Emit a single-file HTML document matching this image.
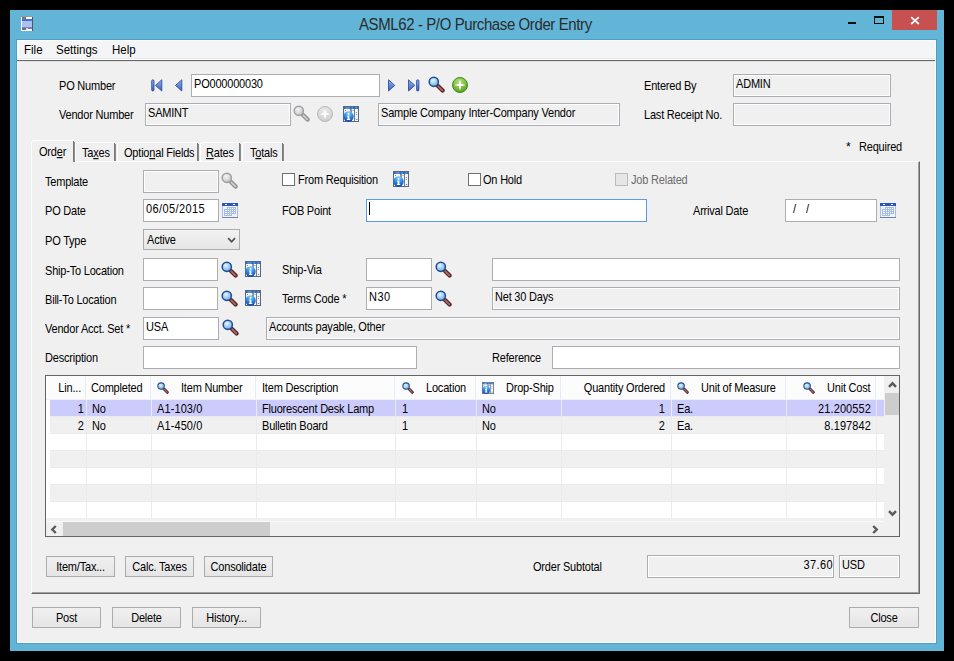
<!DOCTYPE html>
<html><head><meta charset="utf-8">
<style>
*{box-sizing:border-box;margin:0;padding:0}
html,body{width:954px;height:661px;overflow:hidden;background:#000}
body{position:relative;font-family:"Liberation Sans",sans-serif;font-size:11px;color:#000;letter-spacing:-0.2px}
.a{position:absolute}
.t{position:absolute;white-space:nowrap;line-height:13px;transform:scaleY(1.12);transform-origin:0 10.3px}
.in{position:absolute;background:#fff;border:1px solid #abadb3}
.ro{position:absolute;background:#f0f0f0;border:1px solid #abadb3;box-shadow:inset 1px 1px 0 #fff,inset -1px -1px 0 #fff}
.it{position:absolute;left:2px;top:3px;white-space:nowrap;line-height:13px;transform:scaleY(1.12);transform-origin:0 10.3px}
.btn{position:absolute;border:1px solid #acacac;background:linear-gradient(#f0f0f0,#e5e5e5);text-align:center;line-height:19px}
.btn span{display:inline-block;position:relative;top:1px;transform:scaleY(1.12);transform-origin:0 13.3px}
svg.i{position:absolute;overflow:visible}
</style></head><body>
<svg width="0" height="0" style="position:absolute">
<defs>
<linearGradient id="gb" x1="0" y1="0" x2="0" y2="1"><stop offset="0" stop-color="#8fb0ea"/><stop offset="1" stop-color="#3a64c0"/></linearGradient>
<radialGradient id="lens" cx="0.4" cy="0.35" r="0.7"><stop offset="0" stop-color="#e8f4ff"/><stop offset="1" stop-color="#6aa8e8"/></radialGradient>
<radialGradient id="lensg" cx="0.4" cy="0.35" r="0.7"><stop offset="0" stop-color="#f4f4f4"/><stop offset="1" stop-color="#c4c4c4"/></radialGradient>
<radialGradient id="grn" cx="0.45" cy="0.3" r="0.75"><stop offset="0" stop-color="#b4e482"/><stop offset="0.6" stop-color="#78bc3c"/><stop offset="1" stop-color="#4e9a22"/></radialGradient>
<radialGradient id="gry" cx="0.45" cy="0.3" r="0.75"><stop offset="0" stop-color="#ececec"/><stop offset="1" stop-color="#cacaca"/></radialGradient>
<radialGradient id="blu" cx="0.5" cy="0.1" r="0.9"><stop offset="0" stop-color="#86d0ff"/><stop offset="0.5" stop-color="#3690e2"/><stop offset="1" stop-color="#1446b4"/></radialGradient>
<symbol id="mag" viewBox="0 0 17 17"><line x1="10" y1="10" x2="14.6" y2="14.6" stroke="#5a2626" stroke-width="4.2" stroke-linecap="round"/><line x1="10.3" y1="10.3" x2="14.3" y2="14.3" stroke="#a86a6a" stroke-width="1.8" stroke-linecap="round"/><circle cx="5.8" cy="5.8" r="4.6" fill="url(#lens)" stroke="#1d5090" stroke-width="1.5"/></symbol>
<symbol id="magg" viewBox="0 0 17 17"><line x1="10" y1="10" x2="14.6" y2="14.6" stroke="#8c8c8c" stroke-width="4.2" stroke-linecap="round"/><line x1="10.3" y1="10.3" x2="14.3" y2="14.3" stroke="#cfcfcf" stroke-width="1.8" stroke-linecap="round"/><circle cx="5.8" cy="5.8" r="4.6" fill="url(#lensg)" stroke="#a0a0a0" stroke-width="1.5"/></symbol>
<symbol id="plus" viewBox="0 0 16 16"><circle cx="8" cy="8" r="7.5" fill="url(#grn)" stroke="#3f8a1a" stroke-width="1"/><path d="M7 3.2h2v9.6h-2zM3.2 7h9.6v2h-9.6z" fill="#d4ecc0" opacity="0.6"/><path d="M7 4.8h2v2.2h2.2v2h-2.2v2.2h-2v-2.2h-2.2v-2h2.2z" fill="#fff"/></symbol>
<symbol id="plusg" viewBox="0 0 16 16"><circle cx="8" cy="8" r="7.5" fill="url(#gry)" stroke="#bababa" stroke-width="1"/><path d="M7 3.2h2v9.6h-2zM3.2 7h9.6v2h-9.6z" fill="#eee" opacity="0.6"/><path d="M7 4.8h2v2.2h2.2v2h-2.2v2.2h-2v-2.2h-2.2v-2h2.2z" fill="#fff"/></symbol>
<symbol id="info" viewBox="0 0 16 16"><rect x="0" y="0" width="16" height="16" fill="#55697a"/><rect x="1" y="1" width="14" height="14" fill="#f4f6f8"/><rect x="1" y="1" width="14" height="2" fill="#2f6cc0"/><rect x="2.5" y="1.6" width="4" height="0.8" fill="#9cc0ee"/><rect x="8.5" y="1.6" width="1.5" height="0.8" fill="#9cc0ee"/><rect x="12.5" y="1.6" width="1.5" height="0.8" fill="#9cc0ee"/><rect x="7.3" y="3" width="1.4" height="12" fill="#5a6e80"/><rect x="11" y="3" width="1" height="12" fill="#6a7e90"/><rect x="2" y="4" width="1" height="1" fill="#8494a4"/><rect x="9.5" y="4" width="1" height="1" fill="#8494a4"/><rect x="12.8" y="6" width="1" height="1" fill="#6a88b0"/><rect x="12.8" y="8" width="1" height="1" fill="#6a88b0"/><rect x="12.8" y="13" width="1.5" height="1" fill="#6a88b0"/><circle cx="5.5" cy="10.5" r="5.2" fill="url(#blu)"/><circle cx="5.6" cy="7.9" r="0.95" fill="#fff"/><path d="M4.5 9.4h1.9v3.5h0.8v1h-3.3v-1h0.7v-2.5h-0.7z" fill="#fff"/></symbol>
<symbol id="cal" viewBox="0 0 16 15"><rect x="0" y="0" width="16" height="15" fill="#a9bde6"/><rect x="1" y="3" width="14" height="11" fill="#eef3fc"/><rect x="0" y="0" width="16" height="3" fill="#2d55b5"/><rect x="3" y="1" width="2" height="1" fill="#fff"/><rect x="11" y="1" width="2" height="1" fill="#fff"/><rect x="0" y="14" width="16" height="1" fill="#6c84b4"/><path d="M5 4h9v7h-4v2h-8v-7h3z" fill="#a4bce8"/><rect x="6" y="5" width="1" height="1" fill="#fff"/><rect x="8" y="5" width="1" height="1" fill="#fff"/><rect x="10" y="5" width="1" height="1" fill="#fff"/><rect x="12" y="5" width="1" height="1" fill="#fff"/><rect x="6" y="7" width="1" height="1" fill="#fff"/><rect x="8" y="7" width="1" height="1" fill="#fff"/><rect x="10" y="7" width="1" height="1" fill="#fff"/><rect x="12" y="7" width="1" height="1" fill="#fff"/><rect x="6" y="9" width="1" height="1" fill="#fff"/><rect x="8" y="9" width="1" height="1" fill="#fff"/><rect x="10" y="9" width="1" height="1" fill="#fff"/><rect x="12" y="9" width="1" height="1" fill="#fff"/><rect x="6" y="11" width="1" height="1" fill="#fff"/><rect x="8" y="11" width="1" height="1" fill="#fff"/><rect x="3" y="7" width="2" height="1" fill="#fff"/><rect x="3" y="9" width="2" height="1" fill="#fff"/><rect x="3" y="11" width="2" height="1" fill="#fff"/></symbol>
<symbol id="first" viewBox="0 0 12 13"><rect x="0.7" y="0.8" width="2.3" height="11.2" rx="1.1" fill="url(#gb)" stroke="#24449a" stroke-width="0.8"/><path d="M10.8 0.8v11.2l-6.4-5.6z" fill="url(#gb)" stroke="#24449a" stroke-width="0.8" stroke-linejoin="round"/></symbol>
<symbol id="prev" viewBox="0 0 8 13"><path d="M6.8 0.8v11.2l-6.3-5.6z" fill="url(#gb)" stroke="#24449a" stroke-width="0.8" stroke-linejoin="round"/></symbol>
<symbol id="next" viewBox="0 0 8 13"><path d="M0.5 0.8v11.2l6.3-5.6z" fill="url(#gb)" stroke="#24449a" stroke-width="0.8" stroke-linejoin="round"/></symbol>
<symbol id="last" viewBox="0 0 12 13"><path d="M0.5 0.8v11.2l6.4-5.6z" fill="url(#gb)" stroke="#24449a" stroke-width="0.8" stroke-linejoin="round"/><rect x="8.6" y="0.8" width="2.3" height="11.2" rx="1.1" fill="url(#gb)" stroke="#24449a" stroke-width="0.8"/></symbol>
</defs></svg>

<!-- window frame -->
<div class="a" style="left:10px;top:10px;width:934px;height:641px;background:#62b5d6"></div>
<div class="a" style="left:16px;top:39px;width:921px;height:605px;background:#4f9fc0"></div>
<!-- title icon -->
<svg class="i" style="left:21px;top:16px" width="12" height="15"><rect x="0" y="0" width="12" height="15" fill="#fff"/><rect x="11" y="0" width="1" height="15" fill="#555"/><rect x="0" y="0" width="12" height="1" fill="#999"/><rect x="1" y="1" width="4" height="2" fill="#777"/><rect x="1" y="3" width="10" height="2" fill="#3f72e8"/><rect x="1" y="5" width="10" height="6" fill="#b0c0ec"/><rect x="1" y="11" width="10" height="1" fill="#7088c8"/><rect x="1" y="12" width="4" height="2" fill="#707070"/><rect x="5" y="12" width="2" height="2" fill="#ddd"/><rect x="7" y="12" width="4" height="1" fill="#6a7ab0"/><rect x="0" y="14" width="11" height="1" fill="#fff"/></svg>
<div class="t" style="transform:scaleY(1.05);transform-origin:0 14.2px;left:359px;top:16px;font-size:15px;line-height:18px;letter-spacing:-0.4px;color:#2b2b2b">ASML62 - P/O Purchase Order Entry</div>
<!-- caption buttons -->
<div class="a" style="left:848px;top:22px;width:8px;height:2px;background:#111"></div>
<div class="a" style="left:874px;top:16px;width:10px;height:8px;border:1px solid #111;border-top-width:2px"></div>
<div class="a" style="left:892px;top:10px;width:45px;height:20px;background:#c75050"></div>
<svg class="i" style="left:910px;top:16px" width="10" height="9"><path d="M1.2 1.2L8.8 8M8.8 1.2L1.2 8" stroke="#fff" stroke-width="1.7"/></svg>

<!-- client -->
<div class="a" style="left:17px;top:40px;width:919px;height:603px;background:#f0f0f0;border:1px solid #fff"></div>
<!-- menu -->
<div class="a" style="left:18px;top:41px;width:917px;height:17px;background:#f4f5f7"></div>
<div class="a" style="left:18px;top:58px;width:917px;height:1px;background:#e9eaec"></div>
<div class="a" style="left:18px;top:59px;width:917px;height:1px;background:#fff"></div>
<div class="a" style="left:17px;top:60px;width:918px;height:1px;background:#676767"></div>
<div class="a" style="left:18px;top:61px;width:917px;height:1px;background:#e3e3e3"></div>
<div class="t" style="left:24px;top:44px;font-size:11.5px;letter-spacing:0">File</div>
<div class="t" style="left:56px;top:44px;font-size:11.5px;letter-spacing:0">Settings</div>
<div class="t" style="left:112px;top:44px;font-size:11.5px;letter-spacing:0">Help</div>

<!-- header -->
<div class="t" style="left:59px;top:80px">PO Number</div>
<svg class="i" style="left:151px;top:79px" width="12" height="13"><use href="#first"/></svg>
<svg class="i" style="left:175px;top:79px" width="8" height="13"><use href="#prev"/></svg>
<div class="in" style="left:191px;top:74px;width:189px;height:23px"><div class="it">PO000000030</div></div>
<svg class="i" style="left:388px;top:79px" width="8" height="13"><use href="#next"/></svg>
<svg class="i" style="left:408px;top:79px" width="12" height="13"><use href="#last"/></svg>
<svg class="i" style="left:428px;top:76px" width="17" height="17"><use href="#mag"/></svg>
<svg class="i" style="left:452px;top:77px" width="16" height="16"><use href="#plus"/></svg>

<div class="t" style="left:59px;top:109px">Vendor Number</div>
<div class="ro" style="left:145px;top:103px;width:146px;height:23px"><div class="it">SAMINT</div></div>
<svg class="i" style="left:293px;top:105px" width="17" height="17"><use href="#magg"/></svg>
<svg class="i" style="left:317px;top:106px" width="16" height="16"><use href="#plusg"/></svg>
<svg class="i" style="left:343px;top:106px" width="16" height="16"><use href="#info"/></svg>
<div class="ro" style="left:378px;top:103px;width:242px;height:23px"><div class="it">Sample Company Inter-Company Vendor</div></div>

<div class="t" style="left:644px;top:80px">Entered By</div>
<div class="ro" style="left:733px;top:74px;width:158px;height:23px"><div class="it">ADMIN</div></div>
<div class="t" style="left:644px;top:109px">Last Receipt No.</div>
<div class="ro" style="left:733px;top:103px;width:158px;height:23px"></div>

<!-- tabs -->
<div class="t" style="left:846px;top:141px;font-size:12px">*</div>
<div class="t" style="left:859px;top:141px">Required</div>
<!-- tab panel -->
<div class="a" style="left:31px;top:161px;width:889px;height:433px;background:#f0f0f0;border-left:1px solid #fff;border-top:1px solid #fff;border-right:1px solid #696969;border-bottom:1px solid #696969;box-shadow:inset -1px -1px 0 #a0a0a0"></div>
<div class="a" style="left:75px;top:142px;width:41px;height:19px;background:#f0f0f0"></div>
<div class="a" style="left:76px;top:142px;width:38px;height:1px;background:#fff"></div>
<div class="a" style="left:75px;top:143px;width:1px;height:18px;background:#fff"></div>
<div class="a" style="left:114px;top:143px;width:1px;height:18px;background:#7a7a7a"></div>
<div class="a" style="left:115px;top:144px;width:1px;height:17px;background:#8a8a8a"></div>
<div class="a" style="left:117px;top:142px;width:82px;height:19px;background:#f0f0f0"></div>
<div class="a" style="left:118px;top:142px;width:79px;height:1px;background:#fff"></div>
<div class="a" style="left:117px;top:143px;width:1px;height:18px;background:#fff"></div>
<div class="a" style="left:197px;top:143px;width:1px;height:18px;background:#7a7a7a"></div>
<div class="a" style="left:198px;top:144px;width:1px;height:17px;background:#8a8a8a"></div>
<div class="a" style="left:200px;top:142px;width:41px;height:19px;background:#f0f0f0"></div>
<div class="a" style="left:201px;top:142px;width:38px;height:1px;background:#fff"></div>
<div class="a" style="left:200px;top:143px;width:1px;height:18px;background:#fff"></div>
<div class="a" style="left:239px;top:143px;width:1px;height:18px;background:#7a7a7a"></div>
<div class="a" style="left:240px;top:144px;width:1px;height:17px;background:#8a8a8a"></div>
<div class="a" style="left:242px;top:142px;width:42px;height:19px;background:#f0f0f0"></div>
<div class="a" style="left:243px;top:142px;width:39px;height:1px;background:#fff"></div>
<div class="a" style="left:242px;top:143px;width:1px;height:18px;background:#fff"></div>
<div class="a" style="left:282px;top:143px;width:1px;height:18px;background:#7a7a7a"></div>
<div class="a" style="left:283px;top:144px;width:1px;height:17px;background:#8a8a8a"></div>
<div class="a" style="left:31px;top:140px;width:44px;height:22px;background:#f0f0f0"></div>
<div class="a" style="left:33px;top:140px;width:40px;height:1px;background:#fff"></div>
<div class="a" style="left:32px;top:141px;width:1px;height:1px;background:#fff"></div>
<div class="a" style="left:31px;top:142px;width:1px;height:20px;background:#fff"></div>
<div class="a" style="left:73px;top:141px;width:1px;height:21px;background:#7a7a7a"></div>
<div class="a" style="left:74px;top:142px;width:1px;height:20px;background:#8a8a8a"></div>
<div class="t" style="left:39px;top:146px">Ord<u>e</u>r</div>
<div class="t" style="left:82px;top:147px">Ta<u>x</u>es</div>
<div class="t" style="left:124px;top:147px">Optio<u>n</u>al Fields</div>
<div class="t" style="left:206px;top:147px"><u>R</u>ates</div>
<div class="t" style="left:250px;top:147px">T<u>o</u>tals</div>

<!-- row 1 -->
<div class="t" style="left:45px;top:176px">Template</div>
<div class="ro" style="left:143px;top:170px;width:76px;height:23px"></div>
<svg class="i" style="left:221px;top:172px" width="17" height="17"><use href="#magg"/></svg>
<div class="a" style="left:282px;top:173px;width:13px;height:13px;background:#fff;border:1px solid #707070"></div>
<div class="t" style="left:298px;top:174px">From Requisition</div>
<svg class="i" style="left:393px;top:171px" width="16" height="16"><use href="#info"/></svg>
<div class="a" style="left:468px;top:173px;width:13px;height:13px;background:#fff;border:1px solid #707070"></div>
<div class="t" style="left:483px;top:174px">On Hold</div>
<div class="a" style="left:615px;top:173px;width:13px;height:13px;background:#e6e6e6;border:1px solid #bcbcbc"></div>
<div class="t" style="left:631px;top:174px;color:#6d6d6d">Job Related</div>

<!-- row 2 -->
<div class="t" style="left:45px;top:205px">PO Date</div>
<div class="in" style="left:143px;top:199px;width:76px;height:23px"><div class="it" style="letter-spacing:0.4px">06/05/2015</div></div>
<svg class="i" style="left:222px;top:203px" width="16" height="15"><use href="#cal"/></svg>
<div class="t" style="left:282px;top:205px">FOB Point</div>
<div class="in" style="left:366px;top:199px;width:281px;height:23px;border-color:#569de5"><div class="a" style="left:2px;top:2px;width:1px;height:13px;background:#000"></div></div>
<div class="t" style="left:693px;top:205px">Arrival Date</div>
<div class="in" style="left:785px;top:199px;width:92px;height:23px"><div class="it" style="left:7px">/</div><div class="it" style="left:20px">/</div></div>
<svg class="i" style="left:880px;top:203px" width="16" height="15"><use href="#cal"/></svg>

<!-- row 3 -->
<div class="t" style="left:45px;top:235px">PO Type</div>
<div class="a" style="left:143px;top:229px;width:97px;height:21px;border:1px solid #acacac;background:linear-gradient(#f2f2f2,#e6e6e6)"><div class="it" style="left:3px;top:4px">Active</div></div>
<svg class="i" style="left:227px;top:237px" width="9" height="7"><path d="M1.2 1.2L4.6 4.8L8 1.2" stroke="#505050" stroke-width="1.7" fill="none"/></svg>

<!-- row 4 -->
<div class="t" style="left:45px;top:265px">Ship-To Location</div>
<div class="in" style="left:143px;top:258px;width:75px;height:23px"></div>
<svg class="i" style="left:221px;top:261px" width="17" height="17"><use href="#mag"/></svg>
<svg class="i" style="left:245px;top:261px" width="16" height="16"><use href="#info"/></svg>
<div class="t" style="left:282px;top:264px">Ship-Via</div>
<div class="in" style="left:366px;top:258px;width:66px;height:23px"></div>
<svg class="i" style="left:435px;top:261px" width="17" height="17"><use href="#mag"/></svg>
<div class="in" style="left:492px;top:258px;width:408px;height:23px"></div>

<!-- row 5 -->
<div class="t" style="left:45px;top:294px">Bill-To Location</div>
<div class="in" style="left:143px;top:287px;width:75px;height:23px"></div>
<svg class="i" style="left:221px;top:290px" width="17" height="17"><use href="#mag"/></svg>
<svg class="i" style="left:245px;top:290px" width="16" height="16"><use href="#info"/></svg>
<div class="t" style="left:282px;top:293px">Terms Code *</div>
<div class="in" style="left:366px;top:287px;width:66px;height:23px"><div class="it" style="letter-spacing:0.5px">N30</div></div>
<svg class="i" style="left:435px;top:290px" width="17" height="17"><use href="#mag"/></svg>
<div class="ro" style="left:492px;top:287px;width:408px;height:23px"><div class="it">Net 30 Days</div></div>

<!-- row 6 -->
<div class="t" style="left:45px;top:323px">Vendor Acct. Set *</div>
<div class="in" style="left:143px;top:317px;width:76px;height:23px"><div class="it">USA</div></div>
<svg class="i" style="left:222px;top:319px" width="17" height="17"><use href="#mag"/></svg>
<div class="ro" style="left:266px;top:317px;width:634px;height:23px"><div class="it">Accounts payable, Other</div></div>

<!-- row 7 -->
<div class="t" style="left:45px;top:352px">Description</div>
<div class="in" style="left:143px;top:346px;width:274px;height:23px"></div>
<div class="t" style="left:492px;top:352px">Reference</div>
<div class="in" style="left:552px;top:346px;width:348px;height:23px"></div>

<!-- grid -->
<div id="grid" class="a" style="left:45px;top:375px;width:855px;height:162px;border:1px solid #646464;background:#f0f0f0;overflow:hidden">
<div class="a" style="left:0px;top:0px;width:838px;height:23px;background:#fcfcfc"></div>
<div class="a" style="left:0px;top:23px;width:838px;height:1px;background:#eef3fa"></div>
<div class="a" style="left:39px;top:0px;width:1px;height:23px;background:#e3ecf8"></div>
<div class="a" style="left:104px;top:0px;width:1px;height:23px;background:#e3ecf8"></div>
<div class="a" style="left:209px;top:0px;width:1px;height:23px;background:#e3ecf8"></div>
<div class="a" style="left:348px;top:0px;width:1px;height:23px;background:#e3ecf8"></div>
<div class="a" style="left:429px;top:0px;width:1px;height:23px;background:#e3ecf8"></div>
<div class="a" style="left:514px;top:0px;width:1px;height:23px;background:#e3ecf8"></div>
<div class="a" style="left:624px;top:0px;width:1px;height:23px;background:#e3ecf8"></div>
<div class="a" style="left:739px;top:0px;width:1px;height:23px;background:#e3ecf8"></div>
<div class="a" style="left:829px;top:0px;width:1px;height:23px;background:#e3ecf8"></div>
<div class="a" style="left:0px;top:24px;width:838px;height:118px;background:#fff"></div>
<div class="a" style="left:4px;top:24px;width:834px;height:16px;background:#ccccfc"></div>
<div class="a" style="left:4px;top:40px;width:834px;height:1px;background:#ebebeb"></div>
<div class="a" style="left:40px;top:24px;width:1px;height:16px;background:#ebebeb"></div>
<div class="a" style="left:105px;top:24px;width:1px;height:16px;background:#ebebeb"></div>
<div class="a" style="left:210px;top:24px;width:1px;height:16px;background:#ebebeb"></div>
<div class="a" style="left:349px;top:24px;width:1px;height:16px;background:#ebebeb"></div>
<div class="a" style="left:430px;top:24px;width:1px;height:16px;background:#ebebeb"></div>
<div class="a" style="left:515px;top:24px;width:1px;height:16px;background:#ebebeb"></div>
<div class="a" style="left:625px;top:24px;width:1px;height:16px;background:#ebebeb"></div>
<div class="a" style="left:740px;top:24px;width:1px;height:16px;background:#ebebeb"></div>
<div class="a" style="left:830px;top:24px;width:1px;height:16px;background:#ebebeb"></div>
<div class="a" style="left:4px;top:41px;width:834px;height:16px;background:#f0f0f0"></div>
<div class="a" style="left:4px;top:57px;width:834px;height:1px;background:#ebebeb"></div>
<div class="a" style="left:40px;top:41px;width:1px;height:16px;background:#ebebeb"></div>
<div class="a" style="left:105px;top:41px;width:1px;height:16px;background:#ebebeb"></div>
<div class="a" style="left:210px;top:41px;width:1px;height:16px;background:#ebebeb"></div>
<div class="a" style="left:349px;top:41px;width:1px;height:16px;background:#ebebeb"></div>
<div class="a" style="left:430px;top:41px;width:1px;height:16px;background:#ebebeb"></div>
<div class="a" style="left:515px;top:41px;width:1px;height:16px;background:#ebebeb"></div>
<div class="a" style="left:625px;top:41px;width:1px;height:16px;background:#ebebeb"></div>
<div class="a" style="left:740px;top:41px;width:1px;height:16px;background:#ebebeb"></div>
<div class="a" style="left:830px;top:41px;width:1px;height:16px;background:#ebebeb"></div>
<div class="a" style="left:4px;top:58px;width:834px;height:16px;background:#fff"></div>
<div class="a" style="left:4px;top:74px;width:834px;height:1px;background:#ebebeb"></div>
<div class="a" style="left:40px;top:58px;width:1px;height:16px;background:#ebebeb"></div>
<div class="a" style="left:105px;top:58px;width:1px;height:16px;background:#ebebeb"></div>
<div class="a" style="left:210px;top:58px;width:1px;height:16px;background:#ebebeb"></div>
<div class="a" style="left:349px;top:58px;width:1px;height:16px;background:#ebebeb"></div>
<div class="a" style="left:430px;top:58px;width:1px;height:16px;background:#ebebeb"></div>
<div class="a" style="left:515px;top:58px;width:1px;height:16px;background:#ebebeb"></div>
<div class="a" style="left:625px;top:58px;width:1px;height:16px;background:#ebebeb"></div>
<div class="a" style="left:740px;top:58px;width:1px;height:16px;background:#ebebeb"></div>
<div class="a" style="left:830px;top:58px;width:1px;height:16px;background:#ebebeb"></div>
<div class="a" style="left:4px;top:75px;width:834px;height:16px;background:#f0f0f0"></div>
<div class="a" style="left:4px;top:91px;width:834px;height:1px;background:#ebebeb"></div>
<div class="a" style="left:40px;top:75px;width:1px;height:16px;background:#ebebeb"></div>
<div class="a" style="left:105px;top:75px;width:1px;height:16px;background:#ebebeb"></div>
<div class="a" style="left:210px;top:75px;width:1px;height:16px;background:#ebebeb"></div>
<div class="a" style="left:349px;top:75px;width:1px;height:16px;background:#ebebeb"></div>
<div class="a" style="left:430px;top:75px;width:1px;height:16px;background:#ebebeb"></div>
<div class="a" style="left:515px;top:75px;width:1px;height:16px;background:#ebebeb"></div>
<div class="a" style="left:625px;top:75px;width:1px;height:16px;background:#ebebeb"></div>
<div class="a" style="left:740px;top:75px;width:1px;height:16px;background:#ebebeb"></div>
<div class="a" style="left:830px;top:75px;width:1px;height:16px;background:#ebebeb"></div>
<div class="a" style="left:4px;top:92px;width:834px;height:16px;background:#fff"></div>
<div class="a" style="left:4px;top:108px;width:834px;height:1px;background:#ebebeb"></div>
<div class="a" style="left:40px;top:92px;width:1px;height:16px;background:#ebebeb"></div>
<div class="a" style="left:105px;top:92px;width:1px;height:16px;background:#ebebeb"></div>
<div class="a" style="left:210px;top:92px;width:1px;height:16px;background:#ebebeb"></div>
<div class="a" style="left:349px;top:92px;width:1px;height:16px;background:#ebebeb"></div>
<div class="a" style="left:430px;top:92px;width:1px;height:16px;background:#ebebeb"></div>
<div class="a" style="left:515px;top:92px;width:1px;height:16px;background:#ebebeb"></div>
<div class="a" style="left:625px;top:92px;width:1px;height:16px;background:#ebebeb"></div>
<div class="a" style="left:740px;top:92px;width:1px;height:16px;background:#ebebeb"></div>
<div class="a" style="left:830px;top:92px;width:1px;height:16px;background:#ebebeb"></div>
<div class="a" style="left:4px;top:109px;width:834px;height:16px;background:#f0f0f0"></div>
<div class="a" style="left:4px;top:125px;width:834px;height:1px;background:#ebebeb"></div>
<div class="a" style="left:40px;top:109px;width:1px;height:16px;background:#ebebeb"></div>
<div class="a" style="left:105px;top:109px;width:1px;height:16px;background:#ebebeb"></div>
<div class="a" style="left:210px;top:109px;width:1px;height:16px;background:#ebebeb"></div>
<div class="a" style="left:349px;top:109px;width:1px;height:16px;background:#ebebeb"></div>
<div class="a" style="left:430px;top:109px;width:1px;height:16px;background:#ebebeb"></div>
<div class="a" style="left:515px;top:109px;width:1px;height:16px;background:#ebebeb"></div>
<div class="a" style="left:625px;top:109px;width:1px;height:16px;background:#ebebeb"></div>
<div class="a" style="left:740px;top:109px;width:1px;height:16px;background:#ebebeb"></div>
<div class="a" style="left:830px;top:109px;width:1px;height:16px;background:#ebebeb"></div>
<div class="a" style="left:4px;top:126px;width:834px;height:16px;background:#fff"></div>
<div class="a" style="left:4px;top:142px;width:834px;height:1px;background:#ebebeb"></div>
<div class="a" style="left:40px;top:126px;width:1px;height:16px;background:#ebebeb"></div>
<div class="a" style="left:105px;top:126px;width:1px;height:16px;background:#ebebeb"></div>
<div class="a" style="left:210px;top:126px;width:1px;height:16px;background:#ebebeb"></div>
<div class="a" style="left:349px;top:126px;width:1px;height:16px;background:#ebebeb"></div>
<div class="a" style="left:430px;top:126px;width:1px;height:16px;background:#ebebeb"></div>
<div class="a" style="left:515px;top:126px;width:1px;height:16px;background:#ebebeb"></div>
<div class="a" style="left:625px;top:126px;width:1px;height:16px;background:#ebebeb"></div>
<div class="a" style="left:740px;top:126px;width:1px;height:16px;background:#ebebeb"></div>
<div class="a" style="left:830px;top:126px;width:1px;height:16px;background:#ebebeb"></div>
<div class="a" style="left:0px;top:142px;width:838px;height:3px;background:#f0f0f0"></div>
<div class="a" style="left:0px;top:145px;width:838px;height:1px;background:#fafafa"></div>
<div class="t" style="right:818px;top:6px;">Lin...</div>
<div class="t" style="left:45px;top:6px;">Completed</div>
<svg class="i" style="left:111px;top:6px" width="12" height="12"><use href="#mag"/></svg>
<div class="t" style="left:135px;top:6px;">Item Number</div>
<div class="t" style="left:216px;top:6px;">Item Description</div>
<svg class="i" style="left:356px;top:6px" width="12" height="12"><use href="#mag"/></svg>
<div class="t" style="left:380px;top:6px;">Location</div>
<svg class="i" style="left:436px;top:6px" width="12" height="12"><use href="#info"/></svg>
<div class="t" style="left:460px;top:6px;">Drop-Ship</div>
<div class="t" style="right:234px;top:6px;">Quantity Ordered</div>
<svg class="i" style="left:631px;top:6px" width="12" height="12"><use href="#mag"/></svg>
<div class="t" style="left:655px;top:6px;">Unit of Measure</div>
<svg class="i" style="left:757px;top:6px" width="12" height="12"><use href="#mag"/></svg>
<div class="t" style="left:781px;top:6px;">Unit Cost</div>
<div class="t" style="right:815px;top:27px;letter-spacing:0.1px">1</div>
<div class="t" style="left:46px;top:27px;">No</div>
<div class="t" style="left:111px;top:27px;letter-spacing:0.1px">A1-103/0</div>
<div class="t" style="left:216px;top:27px;">Fluorescent Desk Lamp</div>
<div class="t" style="left:356px;top:27px;">1</div>
<div class="t" style="left:436px;top:27px;">No</div>
<div class="t" style="right:234px;top:27px;letter-spacing:0.1px">1</div>
<div class="t" style="left:631px;top:27px;">Ea.</div>
<div class="t" style="right:28px;top:27px;letter-spacing:0.1px">21.200552</div>
<div class="t" style="right:815px;top:44px;letter-spacing:0.1px">2</div>
<div class="t" style="left:46px;top:44px;">No</div>
<div class="t" style="left:111px;top:44px;letter-spacing:0.1px">A1-450/0</div>
<div class="t" style="left:216px;top:44px;">Bulletin Board</div>
<div class="t" style="left:356px;top:44px;">1</div>
<div class="t" style="left:436px;top:44px;">No</div>
<div class="t" style="right:234px;top:44px;letter-spacing:0.1px">2</div>
<div class="t" style="left:631px;top:44px;">Ea.</div>
<div class="t" style="right:28px;top:44px;letter-spacing:0.1px">8.197842</div>
<div class="a" style="left:839px;top:0px;width:14px;height:146px;background:#f0f0f0"></div>
<div class="a" style="left:839px;top:17px;width:14px;height:22px;background:#cdcdcd"></div>
<svg class="i" style="left:842px;top:5px" width="9" height="7"><path d="M1 5.8l3.5-3.5l3.5 3.5" stroke="#5a5a5a" stroke-width="2.4" fill="none"/></svg>
<svg class="i" style="left:842px;top:134px" width="9" height="7"><path d="M1 1.2l3.5 3.5l3.5-3.5" stroke="#5a5a5a" stroke-width="2.4" fill="none"/></svg>
<div class="a" style="left:0px;top:146px;width:853px;height:14px;background:#f0f0f0"></div>
<div class="a" style="left:17px;top:146px;width:207px;height:14px;background:#cdcdcd"></div>
<svg class="i" style="left:4px;top:149px" width="7" height="9"><path d="M5.8 1l-3.5 3.5l3.5 3.5" stroke="#5a5a5a" stroke-width="2.4" fill="none"/></svg>
<svg class="i" style="left:826px;top:149px" width="7" height="9"><path d="M1.2 1l3.5 3.5l-3.5 3.5" stroke="#5a5a5a" stroke-width="2.4" fill="none"/></svg>
</div>

<!-- bottom buttons -->
<div class="btn" style="left:46px;top:556px;width:69px;height:21px"><span>Item/Tax...</span></div>
<div class="btn" style="left:125px;top:556px;width:69px;height:21px"><span>Calc. Taxes</span></div>
<div class="btn" style="left:204px;top:556px;width:69px;height:21px"><span>Consolidate</span></div>
<div class="t" style="left:533px;top:561px">Order Subtotal</div>
<div class="ro" style="left:647px;top:555px;width:187px;height:23px"><div class="it" style="left:auto;right:0px;letter-spacing:0.4px">37.60</div></div>
<div class="ro" style="left:839px;top:555px;width:61px;height:23px"><div class="it">USD</div></div>

<div class="btn" style="left:32px;top:607px;width:69px;height:21px"><span>Post</span></div>
<div class="btn" style="left:112px;top:607px;width:69px;height:21px"><span>Delete</span></div>
<div class="btn" style="left:192px;top:607px;width:69px;height:21px"><span>History...</span></div>
<div class="btn" style="left:849px;top:607px;width:70px;height:21px"><span>Close</span></div>

</body></html>
